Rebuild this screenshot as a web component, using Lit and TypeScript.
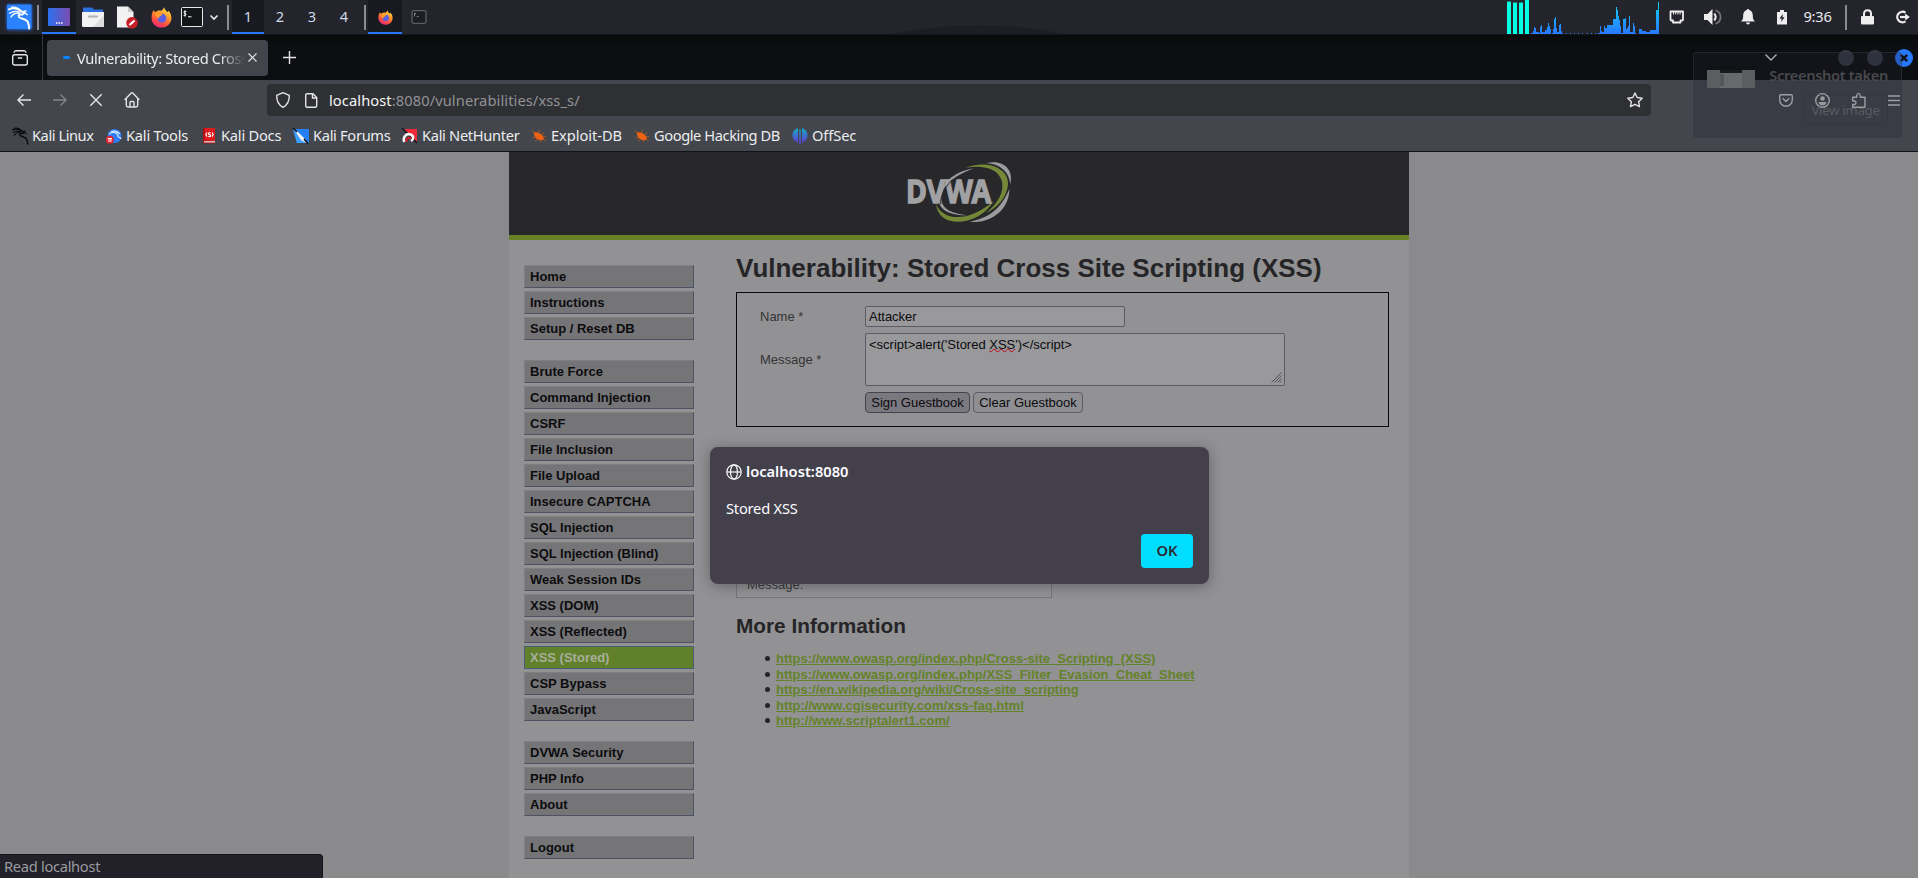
import { LitElement, html, css, svg } from "lit";
import { customElement } from "lit/decorators.js";
import { classMap } from "lit/directives/class-map.js";

const dragon = (color: string, w = 1.5) => svg`
  <g fill="none" stroke=${color} stroke-linecap="round" stroke-linejoin="round">
    <path stroke-width=${w} d="M1 3.4C5 1.6 9.5 2.4 13.2 5.2L16.6 6.8L14.4 8.6C11 8 9.6 9.4 11 11.2C13.2 13.4 18.4 12.2 20 16.4C20.8 18.6 21 20.6 21.2 22.6"/>
    <path stroke-width=${w * 0.7} d="M3.4 1.2C7 .8 10.6 2 13 5M1.6 7.2C5.4 4.8 8.8 4.8 12.2 6.6M3 11C5.4 7.4 8.6 6.4 11.4 8M16.6 6.8L19.2 8.6M14.6 5.6L18 5"/>
  </g>`;

const firefox = (id: string) => svg`
  <defs><linearGradient id=${id} x1="0.8" y1="0" x2="0.3" y2="1">
    <stop offset="0" stop-color="#ffe14a"/><stop offset=".4" stop-color="#ff9a2a"/><stop offset=".75" stop-color="#ff4a43"/><stop offset="1" stop-color="#e8287f"/>
  </linearGradient></defs>
  <path fill="url(#${id})" d="M2.6 3.2C3 4.4 3.8 5 5 5.2C7 3.6 9 3.4 11 4C12 3.5 12.6 2 13.8.2C14.2 3 16.4 4 17.6 5.4C18 5 18 4.400 18 3.600C20.6 6 21.6 9 21.4 12C21 17.600 16.6 21.600 11 21.600C5 21.600 .6 17 .6 11.400C.6 8 1.400 5.400 2.6 3.200Z"/>
  <circle cx="11.400" cy="11.800" r="4.700" fill="#5b5fe0"/>
  <path fill="#ff9b2b" d="M4.600 7.200C7 6.200 9 7.400 10.600 7.200C12 7.400 12 8.400 10.600 9.200C9 9.800 8.600 10.600 8 12C6 11.600 4.600 9.600 4.600 7.200Z"/>`;

const bug = svg`
  <path fill="#ef6212" d="M3 4.500C5.500 3.500 8.500 4.800 10.500 6.500C12.200 8 13 9.800 12.600 11.600C10 13 6 11.800 4.200 9.300C3.200 7.800 2.600 5.800 3 4.500Z"/>
  <path fill="none" stroke="#b0561c" stroke-width="1" d="M3.500 4.500L1 3M5 9.500L1.500 9.800M7 11L4 13.300M9.800 12L9 14.300M7.800 4.600L8.400 1.800M10.400 6.400L13 5M12.200 8.600L15 8.800M12.200 11.300L14.800 13"/>`;

const bookmarks = [
  { label: "Kali Linux", w: 94, ls: -0.45, icon: svg`<g transform="scale(.74) translate(0 -1)">${dragon("#0b0c0e", 2)}</g>` },
  { label: "Kali Tools", w: 95, ls: -0.22, icon: svg`<circle cx="8.500" cy="8" r="7" fill="#2f7df6"/><path d="M3 6C7 3 12 5 12 8C12 10 15 9 15 11M5 4C8 2 12 3.500 14 6" fill="none" stroke="#dcebff" stroke-width="1.200"/><circle cx="3.800" cy="11.800" r="4" fill="#e02530"/><path d="M1.800 10.500H6M3 10.500V14M4.900 10.500V14" stroke="#fff" stroke-width="1" fill="none"/>` },
  { label: "Kali Docs", w: 92, ls: -0.23, icon: svg`<rect x="2" y="0" width="12" height="15.500" rx="1" fill="#a80f14"/><rect x="3.500" y="0" width="10.500" height="12.800" fill="#dc1c1c"/><rect x="3" y="13.200" width="11" height="1.300" fill="#e8dede"/><path d="M6 4.500L4.800 6.600L6 8.600M11 4.500L12.200 6.600L11 8.600M9.600 5C7 4 7 6.500 8.500 6.600C10.500 7 9.600 9.400 7.300 8.200" fill="none" stroke="#fff" stroke-width="1.100"/>` },
  { label: "Kali Forums", w: 109, ls: -0.32, icon: svg`<path d="M0 1H16V15H4Z" fill="#2381f5"/><path d="M0 1L16 15H4Z" fill="#39a1ff"/><path d="M1 1L5 4L11 10L13.500 15L8 12L4.600 7Z" fill="#f4f4f4"/><path d="M0 0L4 4M11 11L15 15.500" stroke="#111" stroke-width="1.600"/>` },
  { label: "Kali NetHunter", w: 129, ls: -0.32, icon: svg`<path d="M2 1H15V14Z" fill="#ef2b38"/><path d="M0 0L15 15" stroke="#15161a" stroke-width="1.500"/><path d="M2.300 14C.2 9 4.500 5 8.500 6.500C12 8 12 11 9 13" fill="none" stroke="#f7f7f7" stroke-width="2.500"/><path d="M4.500 14C3.500 11 6 8.800 9 10.500" fill="none" stroke="#d81828" stroke-width="2"/>` },
  { label: "Exploit-DB", w: 103, ls: -0.05, icon: bug },
  { label: "Google Hacking DB", w: 158, ls: -0.42, icon: bug },
  { label: "OffSec", w: 80, ls: -0.1, icon: svg`<defs><linearGradient id="off" x2="0" y2="1"><stop stop-color="#17a9c5"/><stop offset="1" stop-color="#6433d8"/></linearGradient></defs><path fill="url(#off)" d="M6 0V14.500C-1.500 12-1.500 2.500 6 0ZM7.200 1.500H8.800V16H7.200ZM10 0C17.500 2.500 17.500 12 10 14.500Z"/>` },
];

const menu = [
  ["Home", "Instructions", "Setup / Reset DB"],
  ["Brute Force", "Command Injection", "CSRF", "File Inclusion", "File Upload", "Insecure CAPTCHA", "SQL Injection", "SQL Injection (Blind)", "Weak Session IDs", "XSS (DOM)", "XSS (Reflected)", "XSS (Stored)", "CSP Bypass", "JavaScript"],
  ["DVWA Security", "PHP Info", "About"],
  ["Logout"],
];

const links = [
  "https://www.owasp.org/index.php/Cross-site_Scripting_(XSS)",
  "https://www.owasp.org/index.php/XSS_Filter_Evasion_Cheat_Sheet",
  "https://en.wikipedia.org/wiki/Cross-site_scripting",
  "http://www.cgisecurity.com/xss-faq.html",
  "http://www.scriptalert1.com/",
];

// CPU history: one column per pixel, height in pixels.
const load = [
  1, 1, 3, 7, 6, 2, 2, 2, 1, 7, 9, 2, 2, 2, 4, 4, 7, 11, 8, 5, 0, 1, 5, 15, 17, 6, 2, 2, 9, 10, 3, 1,
  0, 0, 0, 1, 0, 0, 0, 1, 0, 0, 0, 1, 0, 0, 0, 1, 0, 0, 0, 1, 0, 0, 0, 0, 1, 0, 0, 0, 1, 0, 0, 0, 1, 0, 0, 1, 1,
  8, 3, 2, 2, 8, 6, 6, 9, 9, 9, 9, 9, 9, 15, 15, 15, 27, 24, 18, 14, 8, 1, 1, 15, 15, 16, 5, 6, 8, 18, 2, 2, 2, 11, 8, 1,
  0, 0, 0, 5, 5, 5, 3, 3, 3, 3, 2, 2, 2, 2, 4, 4, 4, 4, 4, 4, 24, 24, 32,
];

@customElement("system-panel")
class SystemPanel extends LitElement {
  static styles = css`
    :host { display: flex; align-items: center; height: 34px; background: #23242c; border-bottom: 1px solid #16171c; color: #e8eaed; font: 14.67px "Noto Sans", sans-serif; }
    svg { display: block; overflow: visible; flex: none; }
    .sep { width: 2px; height: 25px; background: #8b8c90; flex: none; }
    .cell { height: 34px; display: flex; align-items: center; justify-content: center; box-sizing: border-box; flex: none; }
    .on { background: #181a21; box-shadow: inset 0 -2px #2777ff; }
    .kali { width: 37px; } .c34 { width: 34px; } .c32 { width: 32px; }
    .c27 { width: 27px; } .c22 { width: 22px; padding-right: 4px; }
    .ws { color: #cfd8e6; padding-bottom: 2px; }
    .clock { width: 41px; letter-spacing: -.25px; padding-bottom: 2px; }
    .gap { flex: 1; }
    .spacer { width: 4px; flex: none; }
    .usage { margin-right: 10px; }
    .t15 { width: 15px; margin-right: 20px; } .t17 { width: 17px; margin-right: 20px; } .t14 { width: 14px; margin-right: 22px; } .t10 { width: 10px; margin-right: 10px; }
    .s2 { margin: 0 14px 0 7px; } .t12 { width: 13px; margin-right: 21px; } .tl { width: 15px; margin-right: 8px; }
    .s1 { margin-right: 3px; }
    .s3 { margin-right: 2px; }
  `;
  render() {
    return html`
      <div class="cell kali"><svg width="26" height="26" viewBox="-2 -2 26 26"><defs><filter id="gl" x="-30%" y="-30%" width="160%" height="160%"><feGaussianBlur stdDeviation="1.600"/></filter></defs><rect x="-1.500" y="-1.500" width="25.500" height="25.500" rx="2" fill="#2777ff" opacity=".8" filter="url(#gl)"/><rect x="-1" y="-1.500" width="24.500" height="24.500" rx="1" fill="#2b82ff"/>${dragon("#fff", 1.9)}</svg></div>
      <div class="sep s1"></div>
      <div class="cell c34 on"><svg width="22" height="18"><defs><linearGradient id="dk"><stop stop-color="#2b70ef"/><stop offset="1" stop-color="#7d4cb0"/></linearGradient></defs><rect width="22" height="18" rx="1" fill="url(#dk)"/><path d="M8 15h1.500M10.500 15h1.500M13 15h1.500" stroke="#fff" stroke-width="1.500"/></svg></div>
      <div class="cell c34"><svg width="22" height="20"><path d="M1 0.500H10L12 2.500H21V8H1Z" fill="#2c6fe0"/><path d="M0 5H22V18.500Q22 20 20.500 20H1.500Q0 20 0 18.500Z" fill="#f2f2f2"/><path d="M22 8V20H11Z" fill="#dcdcdc"/><rect x="6" y="8.500" width="10" height="2" rx="1" fill="#aeb0b3"/></svg></div>
      <div class="cell c34"><svg width="20" height="22"><path d="M0 .5H11L16.500 6V21.500H0Z" fill="#f2f2f2"/><path d="M11 .5L16.500 6H11Z" fill="#c9c9c9"/><circle cx="15" cy="16.800" r="5.800" fill="#c81e28"/><path d="M12.500 19L17.500 14.500" stroke="#fff" stroke-width="2.200"/></svg></div>
      <div class="cell c34"><svg width="21" height="21" viewBox="0 0 22 22">${firefox("fa")}</svg></div>
      <div class="cell c27"><svg width="22" height="20"><rect x=".5" y=".5" width="21" height="19" rx="1" fill="#141519" stroke="#e8e8e8"/><path d="M5.300 4.500C2.500 3.500 2.300 6.300 4 6.500C6 6.800 5 9.200 2.600 8.300M4 3.400V9.700M7 9.800H10.500" fill="none" stroke="#fff"/></svg></div>
      <div class="cell c22"><svg width="8" height="5"><path d="M.5 .5L4 4L7.500 .5" fill="none" stroke="#e8e8e8" stroke-width="1.700"/></svg></div>
      <div class="sep s1"></div>
      ${[1, 2, 3, 4].map((n) => html`<div class=${classMap({ cell: true, c32: true, ws: true, on: n === 1 })}>${n}</div>`)}
      <div class="spacer"></div>
      <div class="sep s3"></div>
      <div class="cell c34 on"><svg width="15" height="15" viewBox="0 0 22 22">${firefox("fb")}</svg></div>
      <div class="cell c34"><svg width="16" height="14"><rect x="1" y=".7" width="14" height="12.600" rx="1.500" fill="#1d1e23" stroke="#5d5e63" stroke-width="1.300"/><path d="M3 3.500H5M3.500 3V6.500M5.800 6.500H7.500" stroke="#85868a"/></svg></div>
      <div class="gap"></div>
      <svg class="usage" width="152" height="34" shape-rendering="crispEdges"><defs><linearGradient id="ld" gradientUnits="userSpaceOnUse" x1="0" y1="4" x2="0" y2="34"><stop stop-color="#13cdf5"/><stop offset="1" stop-color="#2777ff"/></linearGradient></defs>
        <g fill="#04ffe2"><rect x="0" y="2" width="4" height="32"/><rect x="6" y="3" width="4" height="31"/><rect x="12" y="3" width="4" height="31"/><rect x="18" y="0" width="4" height="34"/></g>
        <g fill="#0e867e"><rect x="0" y="1" width="4" height="1"/><rect x="6" y="2" width="4" height="1"/><rect x="12" y="2" width="4" height="1"/></g>
        <g fill="url(#ld)">${load.map((h, i) => svg`<rect x=${24 + i} y=${34 - h} width="1" height=${h}/>`)}</g></svg>
      <svg class="t15" height="14"><path d="M1.500 1.500H14V9.500Q14 10.500 13 10.500H11.500V12.500H4V10.500H2.500Q1.500 10.500 1.500 9.500Z" fill="none" stroke="#eee" stroke-width="1.800" stroke-linejoin="round"/><path d="M4.500 2V4.500M6.700 2V4.500M8.900 2V4.500M11.100 2V4.500" stroke="#eee" stroke-width="1"/></svg>
      <svg class="t17" height="16"><path d="M0 5H3.500L8.500 0V16L3.500 11H0Z" fill="#eee"/><path d="M10.300 4.500Q13 8 10.300 11.500" fill="none" stroke="#eee" stroke-width="2"/><path d="M11.500 1.200C18.200 3.500 18.200 12.500 11.500 14.800" fill="none" stroke="#777" stroke-width="1.700"/></svg>
      <svg class="t14" height="16"><path d="M7 1C10.500 1 11.800 3.500 11.800 6.500C11.800 10 12.500 11 14 12.500H0C1.500 11 2.200 10 2.200 6.500C2.200 3.500 3.500 1 7 1Z" fill="#eee"/><path d="M5 13.500H9Q8.700 15.500 7 15.500T5 13.500Z" fill="#eee"/><circle cx="7" cy="1.300" r="1.300" fill="#eee"/></svg>
      <svg class="t10" height="15"><path d="M0 2H3V0H7V2H10V14.500H0Z" fill="#eee"/><path d="M6 3.800L2.500 8.500H4.700L4 12L7.600 7.300H5.400Z" fill="#20222a"/></svg>
      <div class="cell clock">9:36</div>
      <div class="sep s2"></div>
      <svg class="t12" height="16"><rect y="7" width="13" height="8.500" rx="1" fill="#eee"/><path d="M3 8V4.500C3 .2 10 .2 10 4.500V8" fill="none" stroke="#eee" stroke-width="2"/></svg>
      <svg class="tl" height="14"><path d="M10.500 2.600A5.300 5.300 0 1 0 10.500 11.400" fill="none" stroke="#eee" stroke-width="2.200"/><path d="M5 7H11" stroke="#eee" stroke-width="2.200"/><path d="M10.200 3.600L14.800 7L10.200 10.400Z" fill="#eee"/></svg>
    `;
  }
}

@customElement("browser-chrome")
class BrowserChrome extends LitElement {
  static styles = css`
    :host { display: block; color: #eceded; font: 14.67px "Noto Sans", sans-serif; }
    svg { display: block; flex: none; overflow: visible; fill: none; stroke: #e4e4e5; stroke-width: 1.4; }
    .tabs { height: 45px; background: linear-gradient(#090a0c, #0d0e12 12px); display: flex; align-items: center; }
    .view { width: 43px; height: 45px; display: flex; align-items: center; justify-content: center; border-right: 1px solid #34363b; box-sizing: border-box; padding-right: 2px; }
    .tab { display: flex; align-items: center; width: 221px; height: 36px; margin-left: 4px; background: #42454c; border-radius: 4px; box-sizing: border-box; padding-left: 16px; }
    .spin { width: 7px; height: 3px; border-radius: 2px; background: #0a84ff; margin-right: 7px; flex: none; }
    .title { width: 171px; white-space: nowrap; letter-spacing: -.36px; -webkit-mask-image: linear-gradient(90deg, #000 142px, transparent 168px); }
    .plus { margin-left: 15px; }
    .gap { flex: 1; }
    .chev { margin-right: 61px; }
    .circle { width: 16px; height: 16px; border-radius: 50%; background: #343844; margin-right: 13px; }
    .last { margin-right: 12px; }
    .close { width: 18px; height: 18px; border-radius: 50%; background: #2777ff; margin-right: 5px; display: flex; align-items: center; justify-content: center; }
    .close svg { stroke: #10131a; stroke-width: 2.4; }
    .nav { height: 40px; background: #43464d; display: flex; align-items: center; }
    .back { margin-left: 17px; }
    .dim { opacity: .4; margin-left: 22px; }
    .stop { margin-left: 23px; }
    .home { margin-left: 22px; margin-right: 127px; }
    .url { flex: none; width: 1384px; height: 32px; background: #2f3034; border-radius: 4px; display: flex; align-items: center; box-sizing: border-box; padding: 0 8px 0 9px; margin-right: 128px; color: #929397; }
    .host { color: #f5f5f5; }
    .page { margin-left: 15px; }
    .addr { margin-left: 11px; letter-spacing: .09px; }
    .tool { opacity: .85; margin-right: 22px; }
    .tool:last-child { margin-right: 0; }
    .marks { height: 32px; box-sizing: border-box; background: #43464d; display: flex; align-items: center; padding: 0 0 1px 12px; border-bottom: 1px solid #101318; }
    .mark { display: flex; align-items: center; gap: 4px; white-space: nowrap; flex: none; }
    .mark svg { stroke: none; margin-top: 2px; }
  `;
  render() {
    return html`
      <div class="tabs">
        <div class="view"><svg width="16" height="16"><rect x=".7" y="4.700" width="14.600" height="10.300" rx="2"/><path d="M2 2.700Q2.200 .7 4 .7H12Q13.800 .7 14 2.700M5.800 8H10.200"/></svg></div>
        <div class="tab"><span class="spin"></span><span class="title">Vulnerability: Stored Cross</span><svg class="x" width="9" height="9"><path d="M.5 .5L8.500 8.500M8.500 .5L.5 8.500" stroke-width="1.200"/></svg></div>
        <svg class="plus" width="13" height="13"><path d="M6.500 0V13M0 6.500H13"/></svg>
        <span class="gap"></span>
        <svg class="chev" width="12" height="7"><path d="M.5 .5L6 6L11.500 .5"/></svg>
        <div class="circle"></div><div class="circle last"></div>
        <div class="close"><svg width="8" height="8"><path d="M.8 .8L7.200 7.200M7.200 .8L.8 7.200"/></svg></div>
      </div>
      <div class="nav">
        <svg class="back" width="14" height="12"><path d="M14 6H1M6.500 .6L1 6L6.500 11.400"/></svg>
        <svg class="dim" width="14" height="12"><path d="M0 6H13M7.500 .6L13 6L7.500 11.400"/></svg>
        <svg class="stop" width="12" height="12"><path d="M.3 .3L11.700 11.700M11.700 .3L.3 11.700"/></svg>
        <svg class="home" width="16" height="16"><path d="M.7 7.800L7 1.300Q8 .4 9 1.300L15.300 7.800M2.300 6.500V13.300Q2.300 15 4 15H12Q13.700 15 13.700 13.300V6.500M6 15V10.500Q6 9.500 7 9.500H9Q10 9.500 10 10.500V15"/></svg>
        <div class="url">
          <svg width="14" height="16"><path d="M7 .7L13.300 3.300C13.500 9 11.500 13 7 15.300C2.500 13 .5 9 .7 3.300Z" stroke-linejoin="round"/></svg>
          <svg class="page" width="13" height="15"><path d="M8 .7H2.200Q.7 .7 .7 2.200V12.800Q.7 14.300 2.200 14.300H10.200Q11.700 14.300 11.700 12.800V4.500ZM7.500 1V5H11.500"/></svg>
          <span class="addr"><span class="host">localhost</span>:8080/vulnerabilities/xss_s/</span>
          <span class="gap"></span>
          <svg width="16" height="16"><path d="M8 1L10.200 5.500L15.200 6.200L11.600 9.700L12.500 14.700L8 12.300L3.500 14.700L4.400 9.700L.8 6.200L5.800 5.500Z" stroke-linejoin="round"/></svg>
        </div>
        <svg class="tool" width="14" height="13"><path d="M2 .7H12Q13.300 .7 13.300 2V5.500C13.300 14.500 .7 14.500 .7 5.500V2Q.7 .7 2 .7ZM3.700 4.300L7 7.500L10.300 4.300"/></svg>
        <svg class="tool" width="15" height="15"><circle cx="7.500" cy="7.500" r="6.800"/><circle cx="7.500" cy="5.500" r="2.300" fill="#ddd" stroke="none"/><path d="M3.300 9H11.700Q10.500 12.500 7.500 12.500T3.300 9Z" fill="#ddd" stroke="none"/></svg>
        <svg class="tool" width="14" height="15"><path d="M.7 6.500V4.200H4.700V2.500Q4.700 .7 6.500 .7T8.300 2.500V4.200H13V14.300H.7V11.500H2.500Q4 11.500 4 9.800T2.500 8H.7Z" stroke-linejoin="round"/></svg>
        <svg class="tool" width="12" height="11"><path d="M0 1H12M0 5.500H12M0 10H12"/></svg>
      </div>
      <div class="marks">${bookmarks.map((b) => html`<div class="mark" style="width:${b.w}px;letter-spacing:${b.ls}px"><svg width="16" height="16">${b.icon}</svg><span>${b.label}</span></div>`)}</div>
    `;
  }
}

@customElement("dvwa-page")
class DvwaPage extends LitElement {
  static styles = css`
    :host { display: flex; justify-content: center; height: 726px; overflow: hidden; background: #8a8a8c; font: 13px "Liberation Sans", Arial, sans-serif; color: #343436; }
    .site { width: 900px; background: #929294; flex: none; }
    .head { height: 83px; background: #28282a; border-bottom: 5px solid #6a8128; display: flex; justify-content: center; }
    .head svg { margin-top: 3px; display: block; }
    .logo { font: 700 98px "Noto Sans", sans-serif; fill: #a2a2a4; stroke: #a2a2a4; stroke-width: 4px; }
    .cols { display: flex; padding: 25px 20px 0 15px; }
    .menu { width: 170px; display: flex; flex-direction: column; gap: 20px; margin-right: 42px; }
    .group { display: flex; flex-direction: column; gap: 3px; }
    .item { height: 23px; box-sizing: border-box; background: #757577; border: 1px solid #7f7f82; border-right-color: #4c5163; border-bottom-color: #4c5163; padding-left: 5px; line-height: 21px; font-weight: 700; color: #0c0c0e; }
    .sel { background: #60802a; border-color: #4b5c75; color: #a9ae9c; }
    .main { width: 653px; margin-top: -12px; }
    h1 { font-size: 26px; line-height: 31px; margin: 0 0 8px; color: #252527; white-space: nowrap; }
    .form { border: 1px solid #08080a; height: 135px; box-sizing: border-box; display: grid; grid-template: 21px 53px 21px / 105px 1fr; row-gap: 6px; padding: 13px 0 0 23px; align-items: center; }
    .field { box-sizing: border-box; background: #99999b; border: 1px solid #5c5b66; border-radius: 2px; color: #0b0b0d; padding: 0 3px; }
    .in { width: 260px; height: 21px; line-height: 20px; }
    .area { width: 420px; height: 53px; line-height: 15px; padding-top: 3px; display: flex; position: relative; }
    .bad { text-decoration: underline wavy #c00018 1px; text-underline-offset: -1px; text-decoration-skip-ink: none; }
    .grip { position: absolute; right: 2px; bottom: 2px; }
    .btns { display: flex; gap: 3px; }
    .btn { box-sizing: border-box; height: 21px; border: 1px solid #5c5b66; border-radius: 4px; background: #8f8f93; color: #0b0b0d; line-height: 19px; width: 110px; text-align: center; white-space: nowrap; }
    .first { width: 105px; background: #7b7980; border-color: #44434f; }
    .book { width: 316px; height: 41px; box-sizing: border-box; border: 1px solid #77777a; margin-top: 130px; padding: 19px 10px 0; line-height: 15px; background: #949496; }
    h2 { font-size: 20.8px; line-height: 24px; margin: 16px 0 13px; color: #252527; }
    ul { margin: 0; padding: 0 0 0 40px; list-style: none; }
    li { line-height: 15.6px; color: #252527; }
    li::before { content: ""; display: inline-block; width: 5px; height: 5px; border-radius: 50%; background: #252527; margin: 0 6px 0 -11px; vertical-align: 2px; }
    a { color: #64822a; font-weight: 700; text-decoration: underline; }
  `;
  render() {
    return html`<div class="site">
      <div class="head"><svg width="120" height="80" viewBox="0 0 360 240">
        <g fill="#9c9c9e">
          <path d="M262 24C315 12 345 45 334 88C330 50 305 28 262 24Z"/>
          <path d="M331 102C332 155 285 208 212 200C270 190 307 160 331 102Z"/>
          <path d="M224 40C155 68 125 95 128 138C132 163 160 176 204 181C145 182 118 160 118 130C122 88 165 50 224 40Z"/>
        </g>
        <g fill="#748838">
          <path d="M200 38C270 12 330 42 327 88C324 127 295 158 262 174C298 142 315 112 309 80C300 42 255 28 200 38Z"/>
          <path d="M111 146C130 196 205 206 284 138C240 214 118 225 111 146Z"/>
        </g>
        <text class="logo" x="21" y="145" textLength="256" lengthAdjust="spacingAndGlyphs">DVWA</text>
        <path d="M160 74C135 100 124 125 125 148" stroke="#28282a" stroke-width="3" fill="none"/>
      </svg></div>
      <div class="cols">
        <div class="menu">${menu.map((g) => html`<div class="group">${g.map((t) => html`<div class=${classMap({ item: true, sel: t === "XSS (Stored)" })}>${t}</div>`)}</div>`)}</div>
        <div class="main">
          <h1>Vulnerability: Stored Cross Site Scripting (XSS)</h1>
          <div class="form">
            <span>Name *</span><div class="field in">Attacker</div>
            <span>Message *</span><div class="field area"><span>&lt;script&gt;alert('Stored <span class="bad">XSS</span>')&lt;/script&gt;</span>
              <svg class="grip" width="11" height="11"><path d="M.5 10.500L10.500 .5M3.500 10.500L10.500 3.500M6.500 10.500L10.500 6.500M9 10.500L10.500 9" stroke="#505054" fill="none"/></svg></div>
            <span></span><div class="btns"><div class="btn first">Sign Guestbook</div><div class="btn">Clear Guestbook</div></div>
          </div>
          <div class="book">Message:</div>
          <h2>More Information</h2>
          <ul>${links.map((l) => html`<li><a>${l}</a></li>`)}</ul>
        </div>
      </div>
    </div>`;
  }
}

@customElement("app-root")
class AppRoot extends LitElement {
  static styles = css`
    :host { display: block; position: relative; width: 1918px; height: 878px; overflow: hidden; font: 14.67px "Noto Sans", sans-serif; }
    .alert { position: absolute; left: 710px; top: 447px; width: 499px; height: 137px; box-sizing: border-box; padding: 16px; background: #43404c; border-radius: 8px; color: #fbfbfe; box-shadow: 0 2px 14px rgba(40, 40, 48, .45); display: flex; flex-direction: column; }
    .origin { display: flex; align-items: center; gap: 4px; height: 18px; font-weight: 600; }
    .origin span { padding-bottom: 2px; }
    .origin svg { display: block; }
    .msg { margin-top: 17px; line-height: 20px; letter-spacing: -.22px; }
    .ok { align-self: flex-end; margin-top: 16px; width: 52px; height: 34px; line-height: 32px; border-radius: 4px; background: #00ddff; color: #2b2a33; font-weight: 600; text-align: center; }
    .status { position: absolute; left: 0; bottom: 0; width: 323px; height: 24px; box-sizing: border-box; border-top: 1px solid #131318; border-right: 1px solid #131318; border-radius: 0 4px 0 0; background: #22212a; color: #9b9b9f; padding-left: 4px; line-height: 22px; letter-spacing: -.3px; }
    .toast { position: absolute; left: 1693px; top: 52px; width: 209px; height: 86px; box-sizing: border-box; border: 1px solid rgba(60, 62, 68, .45); border-radius: 4px; background: rgba(34, 36, 46, .28); display: flex; padding: 12px 13px 0 13px; gap: 14px; }
    .thumb { display: block; flex: none; margin-top: 1px; }
    .body { flex: 1; display: flex; flex-direction: column; align-items: flex-end; }
    .cap { font-weight: 600; color: #48494d; line-height: 20px; white-space: nowrap; letter-spacing: -.36px; }
    .view { margin-top: 9px; width: 85px; height: 30px; box-sizing: border-box; border: 1px solid rgba(40, 42, 48, .3); border-radius: 4px; text-align: center; line-height: 30px; font-size: 13.33px; letter-spacing: -.35px; color: #585a60; }
    .edge { position: absolute; left: 890px; top: 25px; }
  `;
  render() {
    return html`
      <system-panel></system-panel>
      <browser-chrome></browser-chrome>
      <dvwa-page></dvwa-page>
      <svg class="edge" width="176" height="9"><path d="M0 9Q88-8 176 9Z" fill="#1d1e25"/></svg>
      <div class="toast">
        <svg class="thumb" width="48" height="22"><rect y="3" width="48" height="19" fill="#5b5d61"/><rect width="48" height="4" fill="#111216"/><rect x="13" y="4" width="22" height="3" fill="#191a1e"/><rect x="13" y="7" width="22" height="15" fill="#67696c"/><rect x="13" y="8" width="4" height="12" fill="#54565a"/></svg>
        <div class="body"><span class="cap">Screenshot taken</span><span class="view">View image</span></div>
      </div>
      <div class="alert">
        <div class="origin"><svg width="16" height="16" fill="none" stroke="#fbfbfe" stroke-width="1.200"><circle cx="8" cy="8" r="7.200"/><ellipse cx="8" cy="8" rx="3.500" ry="7.200"/><path d="M1 8H15"/></svg><span>localhost:8080</span></div>
        <div class="msg">Stored XSS</div>
        <div class="ok">OK</div>
      </div>
      <div class="status">Read localhost</div>
    `;
  }
}
